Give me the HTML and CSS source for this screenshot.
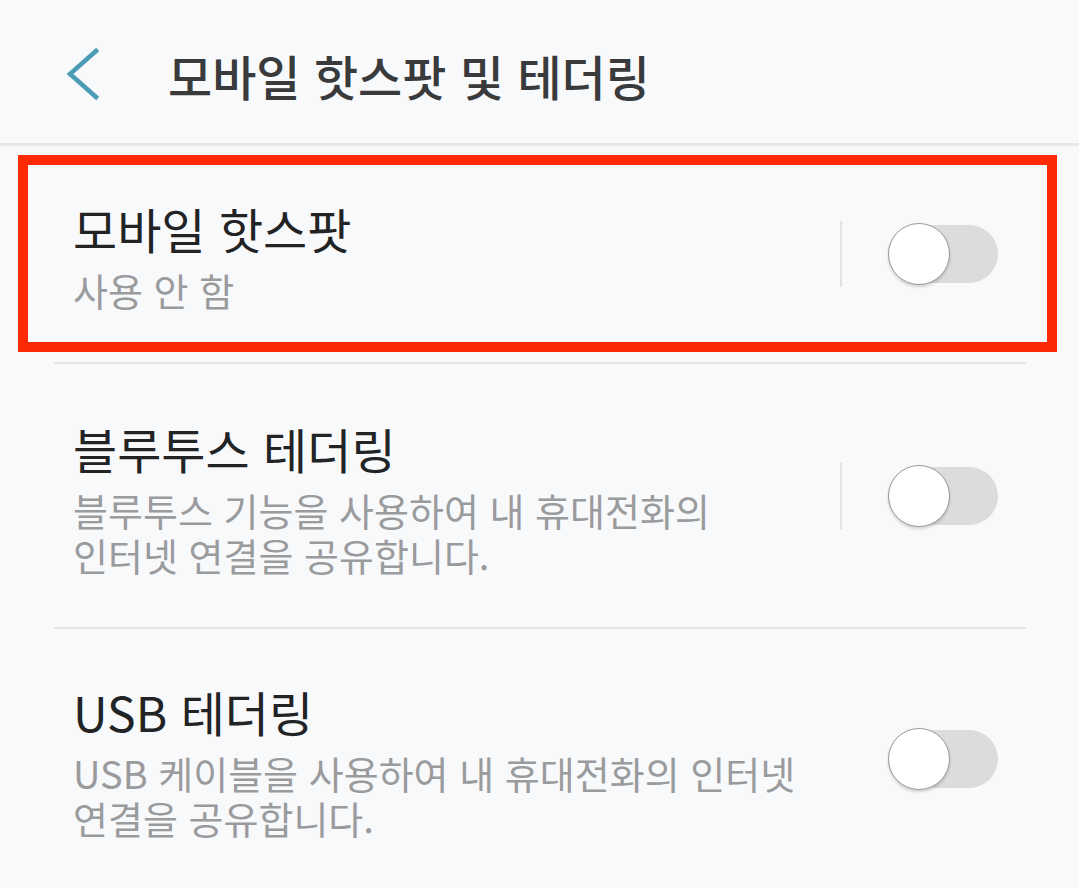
FILE: index.html
```html
<!DOCTYPE html>
<html lang="ko">
<head>
<meta charset="utf-8">
<link rel="stylesheet" href="styles.css">
</head>
<body>
<div class="screen">
  <header class="appbar">
    <svg class="back" width="40" height="56" viewBox="0 0 40 56">
      <polyline points="30,4 4,27 30,50" fill="none" stroke="#4d9cb6" stroke-width="4.5" stroke-linecap="square"/>
    </svg>
    <h1 class="title">모바일 핫스팟 및 테더링</h1>
  </header>

  <div class="row highlight">
    <div class="text">
      <div class="label">모바일 핫스팟</div>
      <div class="sub">사용 안 함</div>
    </div>
    <div class="vdiv"></div>
    <div class="switch"><div class="knob"></div></div>
  </div>
  <div class="hr"></div>

  <div class="row plain r2">
    <div class="text">
      <div class="label">블루투스 테더링</div>
      <div class="sub">블루투스 기능을 사용하여 내 휴대전화의<br>인터넷 연결을 공유합니다.</div>
    </div>
    <div class="vdiv"></div>
    <div class="switch"><div class="knob"></div></div>
  </div>
  <div class="hr"></div>

  <div class="row plain r3">
    <div class="text">
      <div class="label">USB 테더링</div>
      <div class="sub">USB 케이블을 사용하여 내 휴대전화의 인터넷<br>연결을 공유합니다.</div>
    </div>
    <div class="vdiv hidden"></div>
    <div class="switch"><div class="knob"></div></div>
  </div>
</div>
</body>
</html>
```

FILE: styles.css
```css
* { box-sizing: border-box; margin: 0; padding: 0; }
html, body { background: #f8f9fb; }
body {
  width: 1079px;
  height: 888px;
  overflow: hidden;
  font-family: "Noto Sans CJK KR", "Noto Sans", sans-serif;
}
.screen { width: 1079px; }

.appbar {
  height: 146px;
  display: flex;
  align-items: center;
  border-bottom: 3px solid #e6e7e9;
  padding-left: 66px;
  padding-top: 6px;
}
.back { display: block; flex: none; }
.title {
  margin-left: 62px;
  font-size: 48px;
  font-weight: 500;
  color: #383a3c;
  letter-spacing: 0;
  line-height: 1;
}

.row {
  display: flex;
  align-items: center;
  padding-top: 4px;
}
.highlight {
  margin: 9px 22px 0 18px;
  border: 10px solid #fd2a05;
  height: 197px;
  padding-left: 45px;
}
.plain { padding-left: 73px; padding-right: 0; }
.r2 { height: 263px; }
.r3 { height: 259px; }

.text { flex: 1; }
.label {
  font-size: 48px;
  color: #222325;
  line-height: 58px;
  letter-spacing: 0;
}
.sub {
  font-size: 38px;
  color: #9a9b9d;
  line-height: 45px;
  letter-spacing: 0;
  margin-top: 10px;
}

.vdiv {
  width: 2px;
  height: 66px;
  background: #e1e2e4;
  flex: none;
  margin-top: -4px;
}
.vdiv.hidden { background: transparent; }
.highlight .vdiv { margin-right: 46px; }
.plain .vdiv { margin-right: 46px; }

.switch {
  position: relative;
  width: 110px;
  height: 58px;
  border-radius: 29px;
  background: #dcdcde;
  flex: none;
  margin-top: -4px;
}
.highlight .switch { margin-right: 49px; }
.plain .switch { margin-right: 81px; }
.knob {
  position: absolute;
  left: 0;
  top: -2px;
  width: 62px;
  height: 62px;
  border-radius: 50%;
  background: #ffffff;
  border: 1.5px solid #9a9b9d;
  box-shadow: 0 2px 3px rgba(0,0,0,0.16);
}

.hr {
  height: 2px;
  background: #e3e4e6;
  margin: 10px 53px 0 54px;
}
.r2 + .hr { margin-top: 0; }
```
